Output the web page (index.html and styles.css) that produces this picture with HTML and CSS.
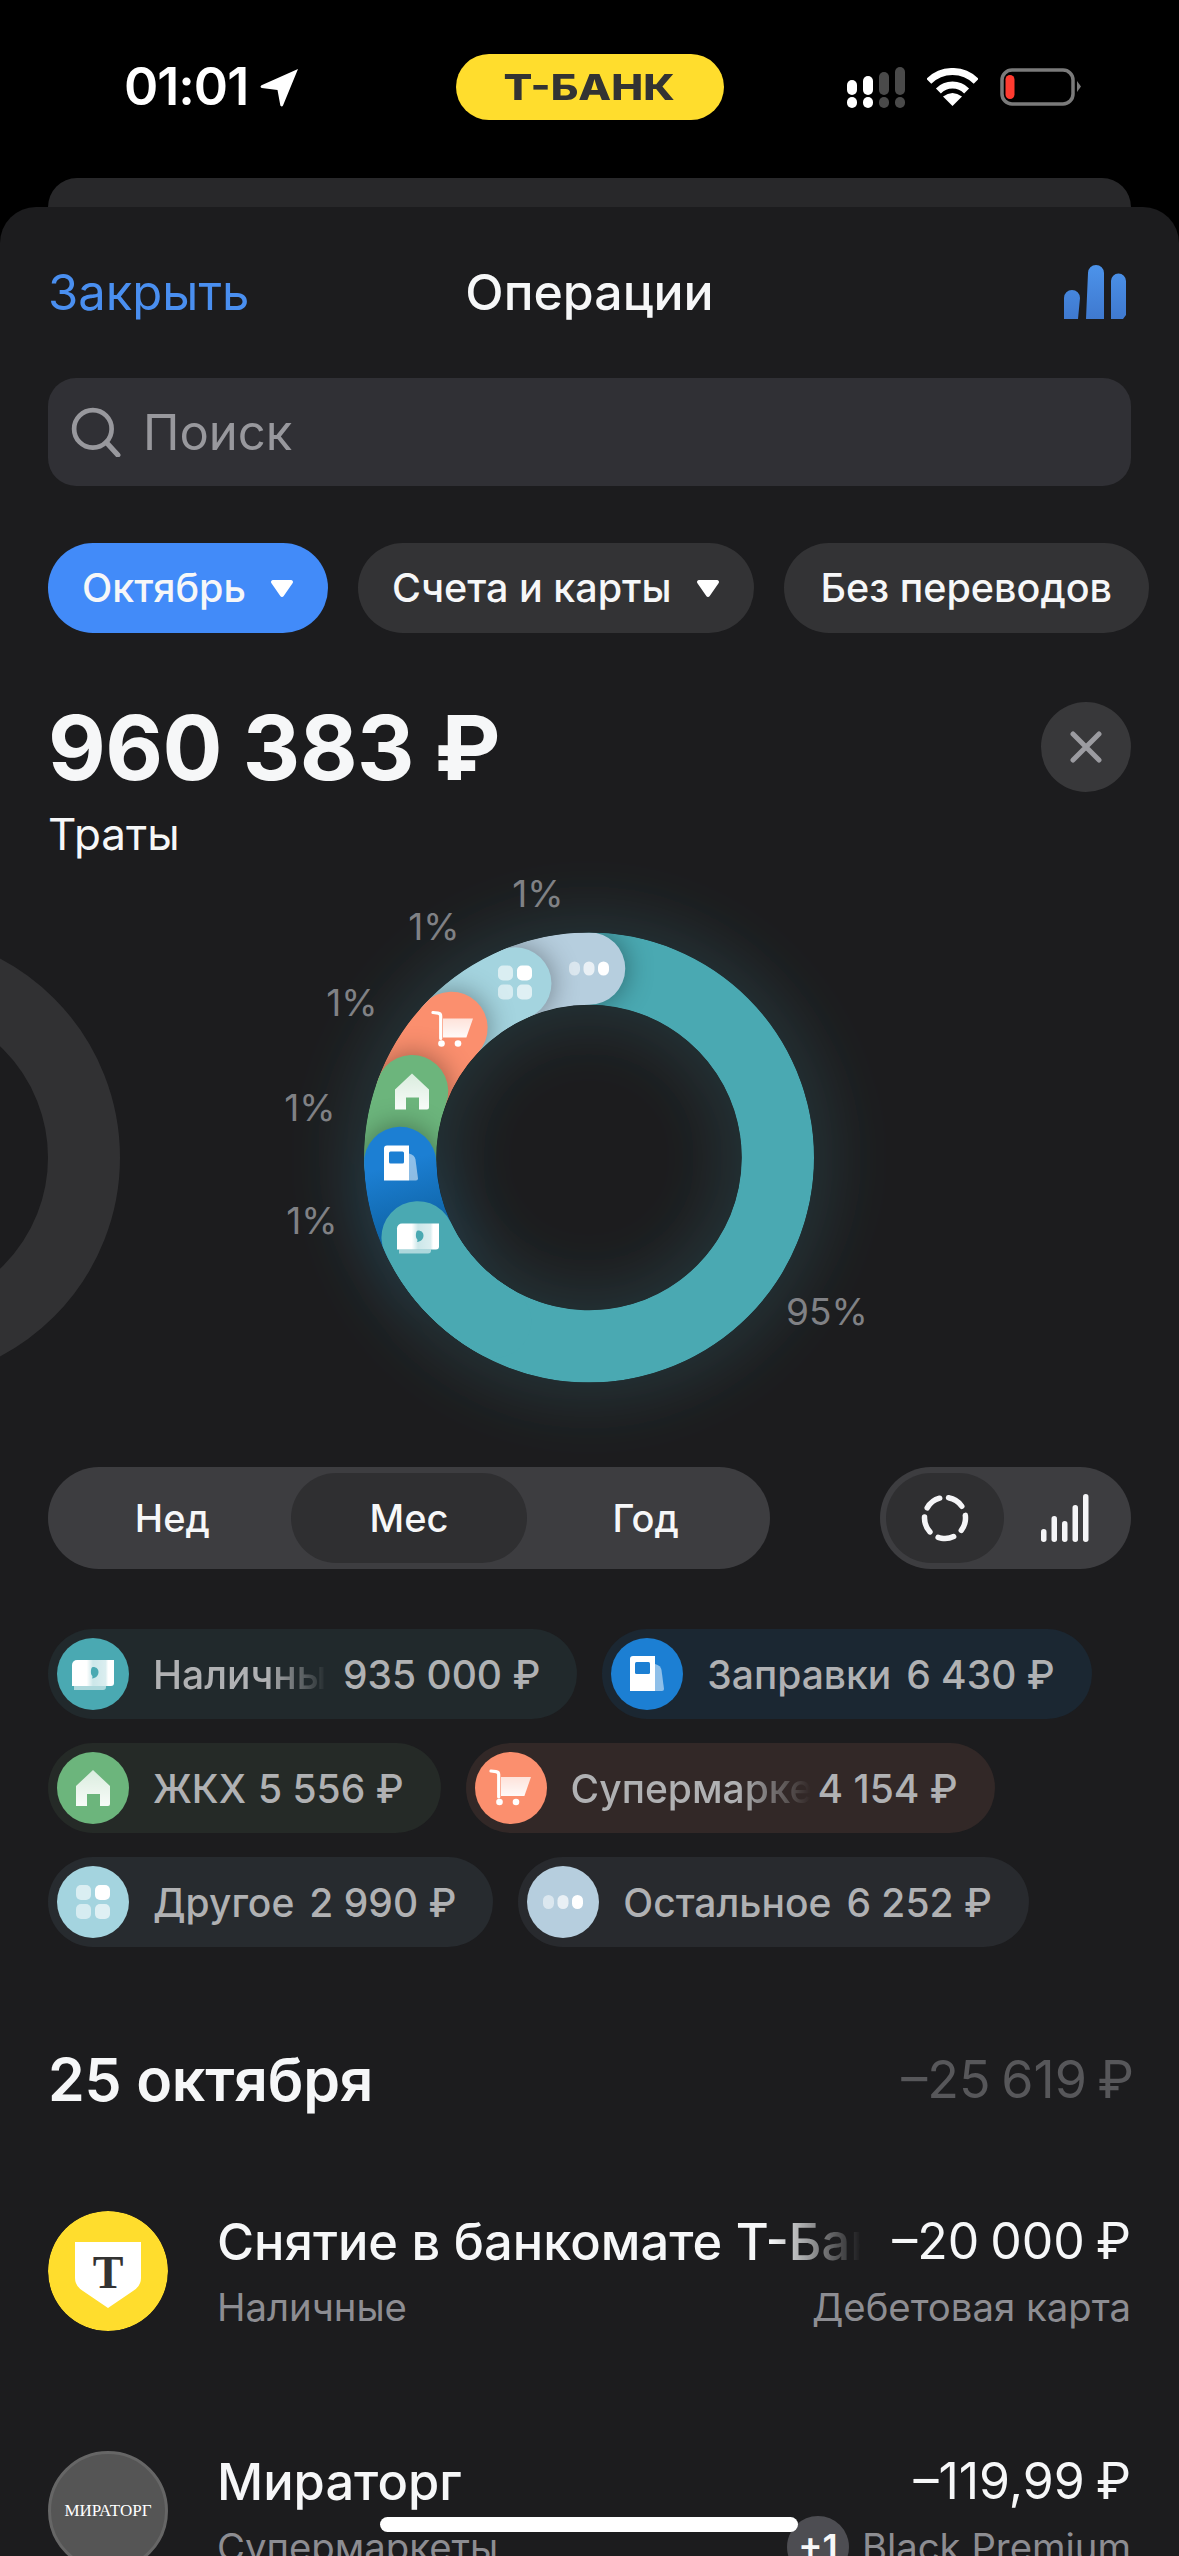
FILE: index.html
```html
<!DOCTYPE html>
<html lang="ru">
<head>
<meta charset="utf-8">
<title>Операции</title>
<link rel="stylesheet" href="styles.css">
</head>
<body>
<svg class="defs" width="0" height="0" aria-hidden="true">
  <defs>
    <linearGradient id="fade-w" x1="0" y1="0" x2="0" y2="1"><stop offset="0" stop-color="#fff" stop-opacity=".75"/><stop offset="1" stop-color="#fff" stop-opacity=".95"/></linearGradient>
    <linearGradient id="cash-g" x1="0" y1="0" x2="1" y2="0"><stop offset="0" stop-color="#fff"/><stop offset=".35" stop-color="#fff"/><stop offset=".5" stop-color="#fff" stop-opacity=".72"/><stop offset=".8" stop-color="#fff" stop-opacity=".8"/><stop offset=".86" stop-color="#fff"/><stop offset="1" stop-color="#fff"/></linearGradient>
    <symbol id="i-cash" viewBox="0 0 48 48">
      <path d="M5 36h32v1a3 3 0 0 1-3 3H5z" fill="#fff" fill-opacity=".55"/>
      <path d="M8 10h37v23a3 3 0 0 1-3 3H3V15a5 5 0 0 1 5-5z" fill="url(#cash-g)"/>
      <path d="M24 17c3.500 0 5.500 2.200 5.500 5 0 3.500-2.500 6-6.500 6.500 .8-1.500 .6-2.500-.4-3.500-1-1.200-1.100-8 1.400-8z" fill="#4aa9b2"/>
    </symbol>
    <symbol id="i-fuel" viewBox="0 0 48 48">
      <path d="M32 14c4 1 6 3 6.500 6l2.500 19a2 2 0 0 1-2 2h-7z" fill="#fff" fill-opacity=".5"/>
      <path d="M10 6h22v35H7V9a3 3 0 0 1 3-3z" fill="#fff"/>
      <rect x="12" y="12" width="15" height="12" rx="1.500" fill="#1c7fd3"/>
    </symbol>
    <symbol id="i-home" viewBox="0 0 48 48">
      <path d="M24 6 41 22v18a2 2 0 0 1-2 2h-8V30H18v12H7V22z" fill="url(#fade-w)"/>
    </symbol>
    <symbol id="i-cart" viewBox="0 0 48 48">
      <path d="M14 13h30l-6.600 19H14z" fill="url(#fade-w)"/>
      <path d="M4 7l5 .6a3 3 0 0 1 2.700 3V33" fill="none" stroke="#fff" stroke-width="3.200" stroke-linecap="round"/>
      <circle cx="12.500" cy="38" r="3.300" fill="#fff"/>
      <circle cx="29" cy="38" r="3.300" fill="#fff"/>
    </symbol>
    <symbol id="i-other" viewBox="0 0 48 48">
      <rect x="7" y="7" width="15" height="15" rx="5" fill="#fff" fill-opacity=".6"/>
      <rect x="26" y="7" width="15" height="15" rx="5" fill="#fff"/>
      <rect x="7" y="26" width="15" height="15" rx="5" fill="#fff" fill-opacity=".55"/>
      <rect x="26" y="26" width="15" height="15" rx="5" fill="#fff" fill-opacity=".65"/>
    </symbol>
    <symbol id="i-dots" viewBox="0 0 48 48">
      <rect x="4" y="17" width="11" height="14" rx="5.500" fill="#fff" fill-opacity=".5"/>
      <rect x="18.500" y="17" width="11" height="14" rx="5.500" fill="#fff" fill-opacity=".7"/>
      <rect x="33" y="17" width="11" height="14" rx="5.500" fill="#fff"/>
    </symbol>
  </defs>
</svg>

<header class="status">
  <div class="status-left">
    <span class="time">01:01</span>
    <svg class="loc" viewBox="0 0 39 39"><path d="M38 1 23 37.500c-.6 1.300-2.400 1.200-2.700-.2L17.500 22 1.800 20c-1.500-.3-1.700-2.200-.3-2.800z" fill="#fff"/></svg>
  </div>
  <div class="pill"><span class="pill-text">Т-БАНК</span></div>
  <div class="status-right">
    <svg class="sig" viewBox="0 0 58 41">
      <rect x="0" y="13" width="10" height="15" rx="5" fill="#fff"/><rect x="16" y="9" width="10" height="19" rx="5" fill="#fff"/>
      <rect x="32" y="5" width="10" height="23" rx="5" fill="#4a4a4a"/><rect x="48" y="0" width="10" height="28" rx="5" fill="#4a4a4a"/>
      <rect x="0" y="30" width="10" height="11" rx="5" fill="#fff"/><rect x="16" y="30" width="10" height="11" rx="5" fill="#fff"/>
      <rect x="32" y="30" width="10" height="11" rx="5" fill="#4a4a4a"/><rect x="48" y="30" width="10" height="11" rx="5" fill="#4a4a4a"/>
    </svg>
    <svg class="wifi" viewBox="0 0 51 38">
      <path d="M1.800 13.300a33.500 33.500 0 0 1 47.400 0M11.400 22.900a20 20 0 0 1 28.200 0" fill="none" stroke="#fff" stroke-width="7"/>
      <path d="M25.500 38 16 28.500q9.500-7 19 0z" fill="#fff"/>
    </svg>
    <svg class="batt" viewBox="0 0 81 38">
      <rect x="2" y="2" width="71" height="34" rx="10" fill="none" stroke="#7a7a7a" stroke-width="3.500"/>
      <rect x="5.500" y="7" width="9" height="24" rx="4.500" fill="#ff3b30"/>
      <path d="M77 13l4 5.500-4 5.500z" fill="#7a7a7a"/>
    </svg>
  </div>
</header>

<div class="back-card"></div>

<main class="sheet">
  <nav class="nav">
    <span class="nav-close">Закрыть</span>
    <span class="nav-title">Операции</span>
    <svg class="nav-chart" viewBox="0 0 62 54">
      <defs><linearGradient id="bar-g" x1="0" y1="0" x2="0" y2="1"><stop offset="0" stop-color="#4c93ea"/><stop offset="1" stop-color="#3f79cf"/></linearGradient></defs>
      <path d="M0 33a8 8 0 0 1 16 0l-2 21H0zM24 8a8 8 0 0 1 16 0v46H22zM47 16a7.500 7.500 0 0 1 15 0v34l-3 4H47z" fill="url(#bar-g)"/>
    </svg>
  </nav>

  <div class="search">
    <svg class="search-ico" viewBox="0 0 48 48"><circle cx="21" cy="21" r="18" fill="none" stroke="#98989d" stroke-width="4.500"/><path d="M34 34 45 46" stroke="#98989d" stroke-width="5" stroke-linecap="round"/></svg>
    <span class="search-text">Поиск</span>
  </div>

  <div class="chips">
    <div class="chip chip-on">Октябрь<svg class="tri" viewBox="0 0 22 17"><path d="M2 0h18a2 2 0 0 1 1.700 3l-9 13a2 2 0 0 1-3.400 0l-9-13A2 2 0 0 1 2 0z" fill="#fff"/></svg></div>
    <div class="chip">Счета и карты<svg class="tri" viewBox="0 0 22 17"><path d="M2 0h18a2 2 0 0 1 1.700 3l-9 13a2 2 0 0 1-3.400 0l-9-13A2 2 0 0 1 2 0z" fill="#fff"/></svg></div>
    <div class="chip chip-plain">Без переводов</div>
  </div>

  <section class="total">
    <div class="total-sum">960 383 ₽</div>
    <div class="round-x"><svg viewBox="0 0 32 32"><path d="M3 3l26 26M29 3 3 29" stroke="#9b9ba0" stroke-width="5" stroke-linecap="round"/></svg></div>
  </section>
  <div class="total-label">Траты</div>

  <svg class="donut" viewBox="0 0 1179 606">
    <defs>
      <filter id="blur" x="-40%" y="-40%" width="180%" height="180%"><feGaussianBlur stdDeviation="30"/></filter>
      <clipPath id="ring"><path clip-rule="evenodd" d="M-225 0a225 225 0 1 0 450 0a225 225 0 1 0-450 0zM-152.500 0a152.500 152.500 0 1 0 305 0a152.500 152.500 0 1 0-305 0z"/></clipPath>
      <linearGradient id="blue-g" gradientUnits="userSpaceOnUse" x1="-189" y1="5" x2="-165" y2="85"><stop offset="0" stop-color="#1c7fd3"/><stop offset="1" stop-color="#0c5f9e"/></linearGradient>
    </defs>
    <circle class="ghost" cx="-105" cy="297" r="189"/>
    <g transform="translate(589 297)">
      <g filter="url(#blur)" class="glow">
        <circle r="189" class="glow-main"/>
        <path class="glow-blue" d="M-188.900 5.600A189 189 0 0 0-145 121"/>
      </g>
      <g clip-path="url(#ring)">
        <path class="arc arc-teal" d="M-171.300 79.900A189 189 0 1 0 0-189"/>
        <path class="arc arc-s arc-dots" d="M0-189A189 189 0 0 0-73.800-174"/>
        <path class="arc arc-s arc-other" d="M-73.800-174A189 189 0 0 0-137.600-129.600"/>
        <path class="arc arc-s arc-cart" d="M-137.600-129.600A189 189 0 0 0-177-66.200"/>
        <path class="arc arc-s arc-home" d="M-177-66.200A189 189 0 0 0-188.900 5.600"/>
        <path class="arc arc-s arc-blue" d="M-188.900 5.600A189 189 0 0 0-171.300 79.900"/>
        <path class="arc arc-teal" d="M-171.300 79.900A189 189 0 0 0-94 164"/>
      </g>
      <use href="#i-dots" x="-24" y="-213" width="48" height="48"/>
      <use href="#i-other" x="-98" y="-199" width="48" height="48"/>
      <use href="#i-cart" x="-160" y="-152" width="48" height="48"/>
      <use href="#i-home" x="-201" y="-90" width="48" height="48"/>
      <use href="#i-fuel" x="-212" y="-18" width="48" height="48"/>
      <use href="#i-cash" x="-195" y="56" width="48" height="48"/>
    </g>
    <g class="pct">
      <text x="538" y="33">1%</text>
      <text x="434" y="66">1%</text>
      <text x="352" y="142">1%</text>
      <text x="310" y="247">1%</text>
      <text x="312" y="360">1%</text>
      <text x="827" y="451">95%</text>
    </g>
  </svg>

  <div class="controls">
    <div class="seg">
      <div class="seg-item">Нед</div>
      <div class="seg-item seg-on">Мес</div>
      <div class="seg-item">Год</div>
    </div>
    <div class="view">
      <div class="view-item view-on">
        <svg class="view-ring" viewBox="0 0 48 48"><circle cx="24" cy="24" r="20.500" fill="none" stroke="#f5f5f7" stroke-width="5.500" stroke-linecap="round" stroke-dasharray="16 9.760" transform="rotate(-80 24 24)"/></svg>
      </div>
      <div class="view-item">
        <svg class="view-bars" viewBox="0 0 48 48"><g fill="#f5f5f7"><rect x="0" y="35" width="5.500" height="13" rx="2.700"/><rect x="10.500" y="22" width="5.500" height="26" rx="2.700"/><rect x="21" y="27" width="5.500" height="21" rx="2.700"/><rect x="31.500" y="11" width="5.500" height="37" rx="2.700"/><rect x="42" y="0" width="5.500" height="48" rx="2.700"/></g></svg>
      </div>
    </div>
  </div>

  <div class="tags">
    <div class="tag tag-cash"><span class="tag-ico ico-cash"><svg><use href="#i-cash"/></svg></span><span class="tag-name tag-fade fade-a">Наличные</span><span class="tag-sum">935 000 ₽</span></div>
    <div class="tag tag-fuel"><span class="tag-ico ico-fuel"><svg><use href="#i-fuel"/></svg></span><span class="tag-name">Заправки</span><span class="tag-sum">6 430 ₽</span></div>
    <div class="tag tag-home"><span class="tag-ico ico-home"><svg><use href="#i-home"/></svg></span><span class="tag-name">ЖКХ</span><span class="tag-sum">5 556 ₽</span></div>
    <div class="tag tag-cart"><span class="tag-ico ico-cart"><svg><use href="#i-cart"/></svg></span><span class="tag-name tag-fade fade-b">Супермаркеты</span><span class="tag-sum">4 154 ₽</span></div>
    <div class="tag tag-other"><span class="tag-ico ico-other"><svg><use href="#i-other"/></svg></span><span class="tag-name">Другое</span><span class="tag-sum">2 990 ₽</span></div>
    <div class="tag tag-rest"><span class="tag-ico ico-dots"><svg><use href="#i-dots"/></svg></span><span class="tag-name">Остальное</span><span class="tag-sum">6 252 ₽</span></div>
  </div>

  <div class="day">
    <span class="day-date">25 октября</span>
    <span class="day-sum">–25 619 ₽</span>
  </div>

  <div class="op">
    <svg class="op-ico" viewBox="0 0 120 120">
      <circle cx="60" cy="60" r="60" fill="#ffdd2d"/>
      <path d="M27 31h66v36q0 8-8 13L60 97 35 80q-8-5-8-13z" fill="#fff"/>
      <text class="op-t" x="60" y="77">Т</text>
    </svg>
    <div class="op-body">
      <div class="op-line">
        <span class="op-title op-fade">Снятие в банкомате Т-Банка</span>
        <span class="op-sum">–20 000 ₽</span>
      </div>
      <div class="op-line op-line2">
        <span class="op-sub">Наличные</span>
        <span class="op-sub">Дебетовая карта</span>
      </div>
    </div>
  </div>

  <div class="op">
    <div class="op-ico op-mir">МИРАТОРГ</div>
    <div class="op-body">
      <div class="op-line">
        <span class="op-title">Мираторг</span>
        <span class="op-sum">–119,99 ₽</span>
      </div>
      <div class="op-line op-line2">
        <span class="op-sub">Супермаркеты</span>
        <span class="op-card"><span class="badge">+1</span><span class="op-sub">Black Premium</span></span>
      </div>
    </div>
  </div>
</main>

<div class="home-bar"></div>
</body>
</html>
```

FILE: styles.css
```css
* { box-sizing: border-box; }
html, body { margin: 0; padding: 0; }
body {
  width: 1179px;
  height: 2556px;
  overflow: hidden;
  background: #000;
  color: #fff;
  font-family: Inter, "Noto Sans", "Liberation Sans", sans-serif;
  position: relative;
}
.defs { position: absolute; }

/* status bar */
.status {
  height: 178px;
  padding-top: 54px;
  display: grid;
  grid-template-columns: 1fr 268px 1fr;
  align-items: start;
}
.status-left { height: 66px; display: flex; align-items: center; padding-left: 124px; gap: 12px; }
.time { font-size: 52px; font-weight: 600; letter-spacing: -1px; line-height: 66px; }
.loc { width: 39px; height: 39px; }
.pill {
  height: 66px;
  border-radius: 33px;
  background: #ffdd2d;
  color: #333;
  font-size: 35px;
  font-weight: 800;
  display: flex;
  align-items: center;
  justify-content: center;
}
.pill-text { display: block; transform: scaleX(1.22); }
.status-right { height: 66px; display: flex; align-items: center; justify-content: flex-end; padding-right: 98px; gap: 22px; }
.sig { width: 58px; height: 41px; }
.wifi { width: 51px; height: 38px; }
.batt { width: 81px; height: 38px; }

.back-card { height: 29px; margin: 0 48px; background: #28282a; border-radius: 36px 36px 0 0; }

/* sheet */
.sheet {
  height: 2349px;
  padding: 55px 48px 0;
  background: #1c1c1e;
  border-radius: 36px 36px 0 0;
  overflow: hidden;
}
.nav { height: 60px; display: grid; grid-template-columns: 1fr auto 1fr; align-items: center; }
.nav-close { font-size: 49px; color: #4a8ff0; }
.nav-title { font-size: 50px; font-weight: 500; color: #f6f7f8; }
.nav-chart { width: 62px; height: 54px; justify-self: end; margin-right: 5px; }

.search {
  margin-top: 56px;
  height: 108px;
  border-radius: 28px;
  background: #303035;
  display: flex;
  align-items: center;
  padding-left: 23px;
  gap: 22px;
}
.search-ico { width: 50px; height: 50px; }
.search-text { font-size: 49px; color: #98989d; }

.chips { margin-top: 57px; display: flex; gap: 30px; width: 1101px; }
.chip {
  height: 90px;
  border-radius: 45px;
  background: #333335;
  display: flex;
  align-items: center;
  padding: 0 35px 0 34px;
  gap: 25px;
  font-size: 39.500px;
  font-weight: 500;
  white-space: nowrap;
  color: #f6f7f8;
}
.chip-on { background: #428bf9; }
.chip-plain { padding: 0 37px; }
.tri { width: 22px; height: 17px; }

.total { margin-top: 69px; height: 90px; display: flex; align-items: center; justify-content: space-between; }
.total-sum { font-size: 89px; font-weight: 700; color: #f6f7f8; letter-spacing: -.5px; }
.round-x { width: 90px; height: 90px; border-radius: 50%; background: #38383a; display: flex; align-items: center; justify-content: center; }
.round-x svg { width: 32px; height: 32px; }
.total-label { margin-top: 16px; height: 52px; line-height: 52px; font-size: 44px; color: #f6f7f8; }

/* donut */
.donut { display: block; width: 1179px; height: 607px; margin: 0 -48px; overflow: visible; }
.ghost { fill: none; stroke: #313133; stroke-width: 72px; }
.glow-main { fill: none; stroke: #4aa9b2; stroke-width: 110px; opacity: .16; }
.glow-blue { fill: none; stroke: #1c7fd3; stroke-width: 70px; opacity: .14; }
.arc { fill: none; stroke-width: 72.500px; stroke-linecap: round; }
.arc-s { filter: drop-shadow(0 0 14px rgba(0, 0, 0, .4)); }
.arc-teal { stroke: #4aa9b2; }
.arc-dots { stroke: #b6cede; }
.arc-other { stroke: #a4d4df; }
.arc-cart { stroke: #fb8f6e; }
.arc-home { stroke: #6cb57c; }
.arc-blue { stroke: url(#blue-g); }
.pct text { font-size: 37px; fill: #808185; text-anchor: middle; dominant-baseline: central; }

/* controls */
.controls { display: flex; justify-content: space-between; height: 102px; }
.seg { width: 722px; height: 102px; border-radius: 51px; background: #3d3d40; padding: 6px; display: flex; }
.seg-item {
  flex: 1;
  border-radius: 45px;
  display: flex;
  align-items: center;
  justify-content: center;
  font-size: 38px;
  font-weight: 500;
  color: #f6f7f8;
}
.seg-on { background: #2f2f31; }
.view { width: 251px; height: 102px; border-radius: 51px; background: #3d3d40; padding: 6px; display: flex; }
.view-item { flex: 1; display: flex; align-items: center; justify-content: center; border-radius: 45px; }
.view-on { background: #2f2f31; flex: 0 0 118px; }
.view-ring { width: 48px; height: 48px; }
.view-bars { width: 48px; height: 48px; }

/* tags */
.tags { margin-top: 60px; display: flex; flex-wrap: wrap; gap: 24px 25px; width: 1083px; }
.tag {
  height: 90px;
  border-radius: 45px;
  display: flex;
  align-items: center;
  padding: 0 37px 0 9px;
  font-size: 39px;
  font-weight: 500;
  color: #b0b1b3;
  white-space: nowrap;
}
.tag-ico { width: 72px; height: 72px; border-radius: 50%; margin-right: 24px; display: flex; align-items: center; justify-content: center; flex: none; }
.tag-ico svg { width: 48px; height: 48px; }
.tag-name { margin-right: 15px; }
.tag-home .tag-name { margin-right: 12px; }
.tag-fade { overflow: hidden; }
.tag-name.tag-fade { margin-right: 0; }
.fade-a { width: 190px; -webkit-mask-image: linear-gradient(90deg, #000 60%, transparent 92%); mask-image: linear-gradient(90deg, #000 60%, transparent 92%); }
.fade-b { width: 247px; -webkit-mask-image: linear-gradient(90deg, #000 68%, transparent 97%); mask-image: linear-gradient(90deg, #000 68%, transparent 97%); }
.tag-cash { background: #21292c; }
.tag-fuel { background: #1b2732; }
.tag-home { background: #252a27; }
.tag-cart { background: #322827; }
.tag-other { background: #272b2f; }
.tag-rest { background: #282a2e; }
.ico-cash { background: #4aa9b2; }
.ico-fuel { background: #1c7fd3; }
.ico-home { background: #6cb57c; }
.ico-cart { background: #fb8f6e; }
.ico-other { background: #a4d4df; }
.ico-dots { background: #b6cede; }

/* operations */
.day { margin-top: 99px; height: 66px; display: flex; align-items: center; justify-content: space-between; }
.day-date { font-size: 59px; font-weight: 600; color: #f6f7f8; letter-spacing: -.2px; }
.day-sum { font-size: 52px; color: #57575a; margin-right: -3px; word-spacing: -4px; }

.op { margin-top: 99px; display: flex; gap: 49px; height: 120px; }
.op + .op { margin-top: 120px; }
.op-ico { width: 120px; height: 120px; flex: none; border-radius: 50%; }
.op-t { font-family: "Liberation Serif", serif; font-size: 46px; font-weight: 700; fill: #333; text-anchor: middle; }
.op-mir {
  background: #555;
  border: 3px solid #666;
  display: flex;
  align-items: center;
  justify-content: center;
  font-family: "Liberation Serif", serif;
  font-size: 17px;
  color: #fff;
}
.op-body { flex: 1; min-width: 0; }
.op-line { display: flex; justify-content: space-between; align-items: center; height: 60px; }
.op-line2 { margin-top: 13px; height: 46px; overflow: visible; }
.op-title { flex: 1; min-width: 0; font-size: 50.600px; font-weight: 500; color: #f6f7f8; white-space: nowrap; overflow: hidden; margin-right: 31px; }
.op-fade { -webkit-mask-image: linear-gradient(90deg, #000 86%, transparent 100%); mask-image: linear-gradient(90deg, #000 86%, transparent 100%); }
.op-sum { font-size: 50px; color: #f6f7f8; white-space: nowrap; word-spacing: -3px; }
.op-sub { font-size: 38.300px; color: #8d8d92; white-space: nowrap; }
.op-card { display: flex; align-items: center; gap: 13px; }
.badge { width: 62px; height: 62px; border-radius: 50%; background: #4d4d52; color: #f6f7f8; font-size: 36px; font-weight: 600; display: flex; align-items: center; justify-content: center; }

.home-bar { position: absolute; left: 380px; top: 2517px; width: 418px; height: 15px; border-radius: 8px; background: #fff; }
```
